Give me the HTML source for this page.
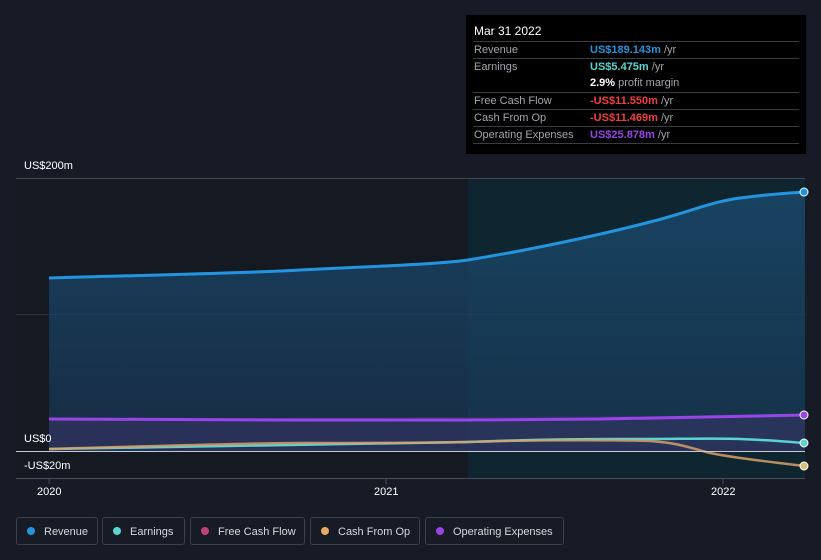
<!DOCTYPE html>
<html><head><meta charset="utf-8"><style>
body{margin:0;width:821px;height:560px;background:#161b25;font-family:"Liberation Sans",sans-serif;overflow:hidden;position:relative}
.tt{position:absolute;left:466px;top:15px;width:340px;height:139px;background:#000;color:#fff;font-size:11px}
.tt .h{position:absolute;left:8px;top:9px;font-size:12px}
.row{position:absolute;left:7px;width:326px;height:17px;border-top:1px solid #3a3d44;line-height:17px}
.row .l{position:absolute;left:1px;color:#a3a6ab}
.row .v{position:absolute;left:117px;font-weight:bold}
.row .v span{font-weight:normal;color:#a3a6ab}
.lab{position:absolute;color:#fff;font-size:11px}
.leg{position:absolute;top:517px;height:28px;border:1px solid #3c404a;border-radius:3px;color:#d6d8dc;font-size:11px;line-height:28px;box-sizing:border-box}
.leg i{display:inline-block;width:8px;height:8px;border-radius:50%;margin:0 9px 0 10px;vertical-align:-0px}
</style></head><body>
<svg width="821" height="560" style="position:absolute;left:0;top:0">
<defs>
<linearGradient id="rg" x1="0" y1="0" x2="0" y2="1"><stop offset="0" stop-color="#1a4a6e" stop-opacity=".8"/><stop offset="1" stop-color="#1a3a5a" stop-opacity=".6"/></linearGradient>
</defs>
<rect x="16" y="178" width="452" height="300" fill="#141922"/>
<rect x="468" y="178" width="337" height="300" fill="#0f2630"/>
<line x1="16" y1="178.5" x2="805" y2="178.5" stroke="#444852"/>
<line x1="16" y1="314.5" x2="805" y2="314.5" stroke="#2a3140"/>
<path d="M49 278 C150 275 250 273 300 270 C380 266 440 264 468 260 C530 250 600 235 650 222 C690 212 710 202 740 198 C770 194 790 193 805 192 L805 451 L49 451 Z" fill="url(#rg)"/>
<path d="M49 419 L805 415 L805 451 L49 451Z" fill="#3a3468" opacity=".55"/>
<path d="M49 278 C150 275 250 273 300 270 C380 266 440 264 468 260 C530 250 600 235 650 222 C690 212 710 202 740 198 C770 194 790 193 805 192" fill="none" stroke="#2394df" stroke-width="3"/>
<path d="M49 419 L300 420 L468 420 L600 419 L805 415" fill="none" stroke="#9845e8" stroke-width="3"/>
<path d="M49 449 C150 447 300 444 468 442 C520 440 560 439 620 439 C680 439 720 438 740 439 C770 440 790 442 805 443" fill="none" stroke="#5ad4d0" stroke-width="2.5"/>
<path d="M49 449 C150 446 250 443 300 443 C380 443 450 443 500 441 C550 440 620 440 650 441 C680 443 690 448 710 453 C740 459 780 463 805 466" fill="none" stroke="#d6a06a" stroke-width="2.5" opacity=".85"/>
<line x1="16" y1="451.5" x2="805" y2="451.5" stroke="#c8cad0"/>
<line x1="16" y1="478.5" x2="805" y2="478.5" stroke="#4a4e58"/>
<line x1="49" y1="479" x2="49" y2="484" stroke="#4a4e58"/>
<line x1="386" y1="479" x2="386" y2="484" stroke="#4a4e58"/>
<line x1="723" y1="479" x2="723" y2="484" stroke="#4a4e58"/>
<circle cx="804" cy="192" r="4" fill="#2394df" stroke="#fff" stroke-width="1"/>
<circle cx="804" cy="415" r="4" fill="#9845e8" stroke="#fff" stroke-width="1"/>
<circle cx="804" cy="443" r="4" fill="#5ad4d0" stroke="#fff" stroke-width="1"/>
<circle cx="804" cy="466" r="4" fill="#d6c07a" stroke="#fff" stroke-width="1"/>
</svg>
<div class="lab" style="left:24px;top:160px">US$200m</div>
<div class="lab" style="left:24px;top:433px">US$0</div>
<div class="lab" style="left:24px;top:460px">-US$20m</div>
<div class="lab" style="left:37px;top:486px">2020</div>
<div class="lab" style="left:374px;top:486px">2021</div>
<div class="lab" style="left:711px;top:486px">2022</div>
<div class="tt">
<div class="h">Mar 31 2022</div>
<div class="row" style="top:26px"><span class="l">Revenue</span><span class="v" style="color:#2394df">US$189.143m <span>/yr</span></span></div>
<div class="row" style="top:43px"><span class="l">Earnings</span><span class="v" style="color:#5ad4d0">US$5.475m <span>/yr</span></span></div>
<div class="row" style="top:60px;border-top:none"><span class="v" style="color:#fff">2.9% <span>profit margin</span></span></div>
<div class="row" style="top:77px"><span class="l">Free Cash Flow</span><span class="v" style="color:#f0403e">-US$11.550m <span>/yr</span></span></div>
<div class="row" style="top:94px"><span class="l">Cash From Op</span><span class="v" style="color:#f0403e">-US$11.469m <span>/yr</span></span></div>
<div class="row" style="top:111px"><span class="l">Operating Expenses</span><span class="v" style="color:#9845e8">US$25.878m <span>/yr</span></span></div>
<div class="row" style="top:128px;height:0"></div>
</div>
<div class="leg" style="left:16px;width:82px"><i style="background:#2394df"></i>Revenue</div>
<div class="leg" style="left:102px;width:83px"><i style="background:#5ad4d0"></i>Earnings</div>
<div class="leg" style="left:190px;width:115px"><i style="background:#c0427a"></i>Free Cash Flow</div>
<div class="leg" style="left:310px;width:110px"><i style="background:#e8aa62"></i>Cash From Op</div>
<div class="leg" style="left:425px;width:139px"><i style="background:#9845e8"></i>Operating Expenses</div>
</body></html>
